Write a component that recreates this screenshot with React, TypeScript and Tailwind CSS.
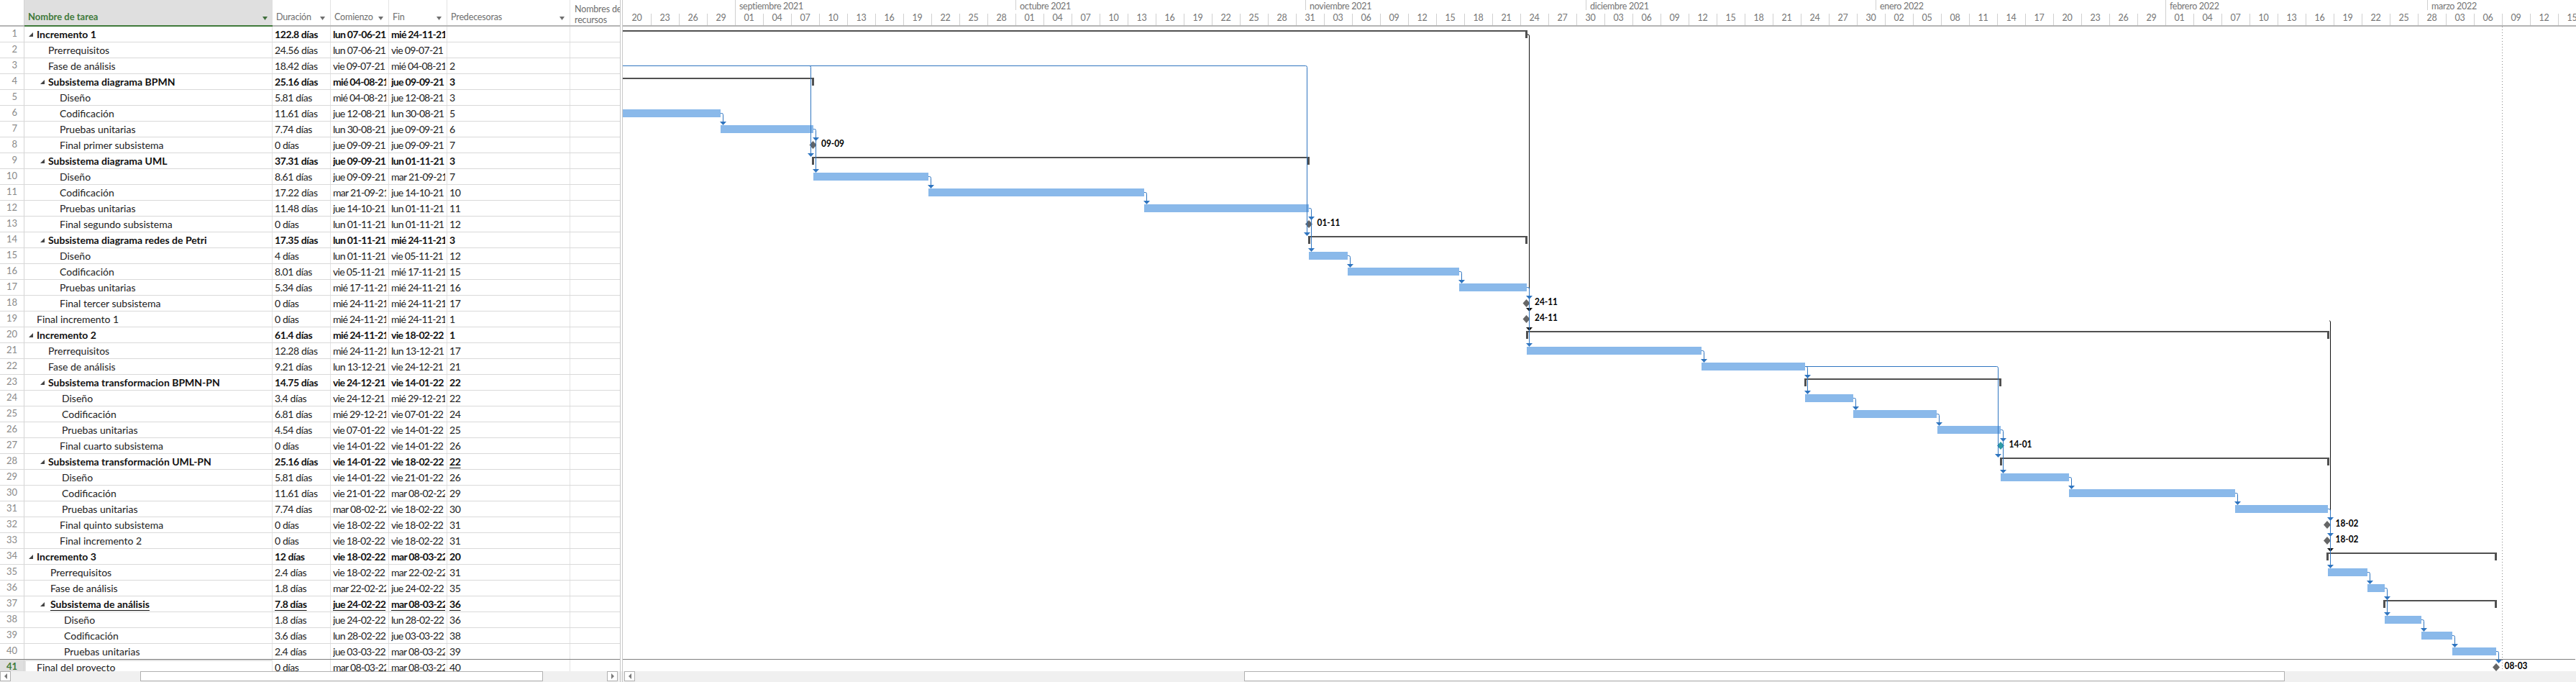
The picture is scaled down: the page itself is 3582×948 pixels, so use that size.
type Row = {
  name: string;
  x: number;
  bold?: boolean;
  toggle?: number;
  dur: string;
  start: string;
  end: string;
  pred: string;
  underline?: boolean;
  predUnderline?: boolean;
};

const rows: Row[] = [
  { name: 'Incremento 1', x: 51, bold: true, toggle: 40, dur: '122.8 días', start: 'lun 07-06-21', end: 'mié 24-11-21', pred: '' },
  { name: 'Prerrequisitos', x: 67, dur: '24.56 días', start: 'lun 07-06-21', end: 'vie 09-07-21', pred: '' },
  { name: 'Fase de análisis', x: 67, dur: '18.42 días', start: 'vie 09-07-21', end: 'mié 04-08-21', pred: '2' },
  { name: 'Subsistema diagrama BPMN', x: 67, bold: true, toggle: 56, dur: '25.16 días', start: 'mié 04-08-21', end: 'jue 09-09-21', pred: '3' },
  { name: 'Diseño', x: 83, dur: '5.81 días', start: 'mié 04-08-21', end: 'jue 12-08-21', pred: '3' },
  { name: 'Codificación', x: 83, dur: '11.61 días', start: 'jue 12-08-21', end: 'lun 30-08-21', pred: '5' },
  { name: 'Pruebas unitarias', x: 83, dur: '7.74 días', start: 'lun 30-08-21', end: 'jue 09-09-21', pred: '6' },
  { name: 'Final primer subsistema', x: 83, dur: '0 días', start: 'jue 09-09-21', end: 'jue 09-09-21', pred: '7' },
  { name: 'Subsistema diagrama UML', x: 67, bold: true, toggle: 56, dur: '37.31 días', start: 'jue 09-09-21', end: 'lun 01-11-21', pred: '3' },
  { name: 'Diseño', x: 83, dur: '8.61 días', start: 'jue 09-09-21', end: 'mar 21-09-21', pred: '7' },
  { name: 'Codificación', x: 83, dur: '17.22 días', start: 'mar 21-09-21', end: 'jue 14-10-21', pred: '10' },
  { name: 'Pruebas unitarias', x: 83, dur: '11.48 días', start: 'jue 14-10-21', end: 'lun 01-11-21', pred: '11' },
  { name: 'Final segundo subsistema', x: 83, dur: '0 días', start: 'lun 01-11-21', end: 'lun 01-11-21', pred: '12' },
  { name: 'Subsistema diagrama redes de Petri', x: 67, bold: true, toggle: 56, dur: '17.35 días', start: 'lun 01-11-21', end: 'mié 24-11-21', pred: '3' },
  { name: 'Diseño', x: 83, dur: '4 días', start: 'lun 01-11-21', end: 'vie 05-11-21', pred: '12' },
  { name: 'Codificación', x: 83, dur: '8.01 días', start: 'vie 05-11-21', end: 'mié 17-11-21', pred: '15' },
  { name: 'Pruebas unitarias', x: 83, dur: '5.34 días', start: 'mié 17-11-21', end: 'mié 24-11-21', pred: '16' },
  { name: 'Final tercer subsistema', x: 83, dur: '0 días', start: 'mié 24-11-21', end: 'mié 24-11-21', pred: '17' },
  { name: 'Final incremento 1', x: 51, dur: '0 días', start: 'mié 24-11-21', end: 'mié 24-11-21', pred: '1' },
  { name: 'Incremento 2', x: 51, bold: true, toggle: 40, dur: '61.4 días', start: 'mié 24-11-21', end: 'vie 18-02-22', pred: '1' },
  { name: 'Prerrequisitos', x: 67, dur: '12.28 días', start: 'mié 24-11-21', end: 'lun 13-12-21', pred: '17' },
  { name: 'Fase de análisis', x: 67, dur: '9.21 días', start: 'lun 13-12-21', end: 'vie 24-12-21', pred: '21' },
  { name: 'Subsistema transformacion BPMN-PN', x: 67, bold: true, toggle: 56, dur: '14.75 días', start: 'vie 24-12-21', end: 'vie 14-01-22', pred: '22' },
  { name: 'Diseño', x: 86, dur: '3.4 días', start: 'vie 24-12-21', end: 'mié 29-12-21', pred: '22' },
  { name: 'Codificación', x: 86, dur: '6.81 días', start: 'mié 29-12-21', end: 'vie 07-01-22', pred: '24' },
  { name: 'Pruebas unitarias', x: 86, dur: '4.54 días', start: 'vie 07-01-22', end: 'vie 14-01-22', pred: '25' },
  { name: 'Final cuarto subsistema', x: 83, dur: '0 días', start: 'vie 14-01-22', end: 'vie 14-01-22', pred: '26' },
  { name: 'Subsistema transformación UML-PN', x: 67, bold: true, toggle: 56, dur: '25.16 días', start: 'vie 14-01-22', end: 'vie 18-02-22', pred: '22', predUnderline: true },
  { name: 'Diseño', x: 86, dur: '5.81 días', start: 'vie 14-01-22', end: 'vie 21-01-22', pred: '26' },
  { name: 'Codificación', x: 86, dur: '11.61 días', start: 'vie 21-01-22', end: 'mar 08-02-22', pred: '29' },
  { name: 'Pruebas unitarias', x: 86, dur: '7.74 días', start: 'mar 08-02-22', end: 'vie 18-02-22', pred: '30' },
  { name: 'Final quinto subsistema', x: 83, dur: '0 días', start: 'vie 18-02-22', end: 'vie 18-02-22', pred: '31' },
  { name: 'Final incremento 2', x: 83, dur: '0 días', start: 'vie 18-02-22', end: 'vie 18-02-22', pred: '31' },
  { name: 'Incremento 3', x: 51, bold: true, toggle: 40, dur: '12 días', start: 'vie 18-02-22', end: 'mar 08-03-22', pred: '20' },
  { name: 'Prerrequisitos', x: 70, dur: '2.4 días', start: 'vie 18-02-22', end: 'mar 22-02-22', pred: '31' },
  { name: 'Fase de análisis', x: 70, dur: '1.8 días', start: 'mar 22-02-22', end: 'jue 24-02-22', pred: '35' },
  { name: 'Subsistema de análisis', x: 70, bold: true, toggle: 56, underline: true, dur: '7.8 días', start: 'jue 24-02-22', end: 'mar 08-03-22', pred: '36' },
  { name: 'Diseño', x: 89, dur: '1.8 días', start: 'jue 24-02-22', end: 'lun 28-02-22', pred: '36' },
  { name: 'Codificación', x: 89, dur: '3.6 días', start: 'lun 28-02-22', end: 'jue 03-03-22', pred: '38' },
  { name: 'Pruebas unitarias', x: 89, dur: '2.4 días', start: 'jue 03-03-22', end: 'mar 08-03-22', pred: '39' },
  { name: 'Final del proyecto', x: 51, dur: '0 días', start: 'mar 08-03-22', end: 'mar 08-03-22', pred: '40' },
];

const months = [
  { label: '', width: 156 },
  { label: 'septiembre 2021', width: 390 },
  { label: 'octubre 2021', width: 403 },
  { label: 'noviembre 2021', width: 390 },
  { label: 'diciembre 2021', width: 403 },
  { label: 'enero 2022', width: 403 },
  { label: 'febrero 2022', width: 364 },
  { label: 'marzo 2022', width: 206 },
];

const days = [
  '20', '23', '26', '29',
  '01', '04', '07', '10', '13', '16', '19', '22', '25', '28',
  '01', '04', '07', '10', '13', '16', '19', '22', '25', '28', '31',
  '03', '06', '09', '12', '15', '18', '21', '24', '27', '30',
  '03', '06', '09', '12', '15', '18', '21', '24', '27', '30',
  '02', '05', '08', '11', '14', '17', '20', '23', '26', '29',
  '01', '04', '07', '10', '13', '16', '19', '22', '25', '28',
  '03', '06', '09', '12', '15',
];

// row -> [from, to] in page pixels
const bars: [number, number, number][] = [
  [6, 867, 1003], [7, 1003, 1132], [10, 1132, 1292], [11, 1292, 1592], [12, 1592, 1821],
  [15, 1821, 1875], [16, 1875, 2030], [17, 2030, 2124], [21, 2124, 2367], [22, 2367, 2511],
  [24, 2511, 2578], [25, 2578, 2694], [26, 2695, 2783], [29, 2783, 2878], [30, 2878, 3109],
  [31, 3109, 3238], [35, 3238, 3293], [36, 3293, 3317], [38, 3317, 3368], [39, 3368, 3411],
  [40, 3411, 3472],
];

// the first two start before the visible part of the timescale
const summaries: [number, number, number][] = [
  [1, 850, 2125], [4, 850, 1133], [9, 1130, 1822], [14, 1820, 2125], [20, 2123, 3240],
  [23, 2510, 2784], [28, 2782, 3240], [34, 3236, 3473], [37, 3315, 3473],
];

const milestones: [number, number, string, string][] = [
  [8, 1131.5, '09-09', '#5f6368'], [13, 1821, '01-11', '#5f6368'], [18, 2123.5, '24-11', '#666666'],
  [19, 2123.5, '24-11', '#666666'], [27, 2783, '14-01', '#2e9aa5'], [32, 3237, '18-02', '#666666'],
  [33, 3237, '18-02', '#666666'], [41, 3472, '08-03', '#666666'],
];

// from bar end at x0 on row, dropping at x to each arrow row
const links: { row: number; x0: number; x: number; to: number[] }[] = [
  { row: 3, x0: 867, x: 1128.5, to: [9] },
  { row: 3, x0: 867, x: 1818.5, to: [14] },
  { row: 6, x0: 1003, x: 1006.5, to: [7] },
  { row: 7, x0: 1132, x: 1135.5, to: [8, 10] },
  { row: 10, x0: 1292, x: 1295.5, to: [11] },
  { row: 11, x0: 1592, x: 1595.5, to: [12] },
  { row: 12, x0: 1821, x: 1824.5, to: [13, 15] },
  { row: 15, x0: 1875, x: 1878.5, to: [16] },
  { row: 16, x0: 2030, x: 2033.5, to: [17] },
  { row: 17, x0: 2124, x: 2127.5, to: [18, 21] },
  { row: 21, x0: 2367, x: 2370.5, to: [22] },
  { row: 22, x0: 2511, x: 2514.5, to: [23, 24] },
  { row: 22, x0: 2511, x: 2779.5, to: [28] },
  { row: 24, x0: 2578, x: 2581.5, to: [25] },
  { row: 25, x0: 2694, x: 2697.5, to: [26] },
  { row: 26, x0: 2783, x: 2786.5, to: [27, 29] },
  { row: 29, x0: 2878, x: 2881.5, to: [30] },
  { row: 30, x0: 3109, x: 3112.5, to: [31] },
  { row: 31, x0: 3238, x: 3241.5, to: [32, 33, 35] },
  { row: 35, x0: 3293, x: 3296.5, to: [36] },
  { row: 36, x0: 3317, x: 3320.5, to: [37, 38] },
  { row: 38, x0: 3368, x: 3371.5, to: [39] },
  { row: 39, x0: 3411, x: 3414.5, to: [40] },
  { row: 40, x0: 3472, x: 3475.5, to: [41] },
];

const rowTop = (n: number) => 37 + 22 * (n - 1);

const Arrow = ({ x, tip, color }: { x: number; tip: number; color: string }) => (
  <polygon points={`${x - 4.5},${tip - 5} ${x + 4.5},${tip - 5} ${x},${tip}`} fill={color} />
);

const FilterMark = ({ green }: { green?: boolean }) => (
  <svg width="7" height="5" viewBox="0 0 7 5" className="mt-[3px] shrink-0">
    <polygon points="0,0 7,0 3.5,5" fill={green ? '#3f6f3c' : '#6f6f6f'} />
  </svg>
);

const HeaderCell = ({ label, className }: { label: string; className: string }) => (
  <div className={`flex items-center justify-between border-r border-[#e3e3e3] pr-[7px] pl-[5px] pt-[13px] text-[12.5px] tracking-[-0.15px] text-[#6e6e6e] ${className}`}>
    <span>{label}</span>
    <FilterMark />
  </div>
);

const TaskTable = () => (
  <div className="w-[863px] shrink-0 overflow-hidden border-r border-[#c8c8c8]">
    <div className="flex h-[37px] border-b-2 border-[#b4b4b4]">
      <div className="w-[34px] shrink-0 border-r border-[#d4d4d4]" />
      <div className="-mb-[2px] flex w-[345px] shrink-0 items-center justify-between border-b-2 border-[#3f7a3a] bg-[#dfdfdf] pr-[7px] pl-[5px] pt-[13px] text-[13px] font-bold text-[#3f7a3a]">
        <span>Nombre de tarea</span>
        <FilterMark green />
      </div>
      <HeaderCell label="Duración" className="w-[81px] shrink-0" />
      <HeaderCell label="Comienzo" className="w-[81px] shrink-0" />
      <HeaderCell label="Fin" className="w-[81px] shrink-0" />
      <HeaderCell label="Predecesoras" className="w-[171px] shrink-0" />
      <div className="w-[69px] shrink-0 overflow-hidden whitespace-nowrap pl-[6px] pt-[5px] text-[12.5px] leading-[15px] tracking-[-0.15px] text-[#6e6e6e]">
        Nombres de
        <br />
        recursos
      </div>
    </div>
    {rows.map((row, i) => {
      const last = i === rows.length - 1;
      const line = i === rows.length - 2 ? 'border-[#7f7f7f]' : 'border-[#d9d9d9]';
      const text = row.bold ? 'font-bold text-[#111]' : 'text-[#222]';
      const mark = row.underline ? 'underline decoration-1 underline-offset-[3px]' : '';
      return (
        <div key={i} className={`flex h-[22px] border-b leading-[21px] ${line}`}>
          <div className={`w-[34px] shrink-0 border-r border-[#d4d4d4] pr-[9px] text-right text-[13px] leading-[18px] ${last ? 'bg-[#dfdfdf] font-bold text-[#3f7a3a]' : 'text-[#8a8a8a]'}`}>
            {i + 1}
          </div>
          <div
            className={`relative w-[345px] shrink-0 whitespace-nowrap border-r border-[#e3e3e3] ${last ? 'h-[22px] border-2 border-[#3f7a3a]' : ''} ${text}`}
          >
            {row.toggle && (
              <svg width="6" height="6" viewBox="0 0 6 6" className="absolute top-[8px]" style={{ left: row.toggle - 34 }}>
                <polygon points="6,0 6,6 0,6" fill="#444" />
              </svg>
            )}
            <span className={`absolute ${mark}`} style={{ left: row.x - 34 - (last ? 2 : 0), top: last ? -2 : 0 }}>
              {row.name}
            </span>
          </div>
          <div className={`w-[81px] shrink-0 overflow-hidden whitespace-nowrap border-r border-[#e3e3e3] pl-[3px] tracking-[-0.4px] ${text} ${mark}`}>{row.dur}</div>
          <div className={`w-[81px] shrink-0 border-r border-[#e3e3e3] px-[3px] tracking-[-0.7px] ${text}`}>
            <div className={`overflow-hidden whitespace-nowrap ${mark}`}>{row.start}</div>
          </div>
          <div className={`w-[81px] shrink-0 border-r border-[#e3e3e3] pl-[3px] pr-[2px] tracking-[-0.7px] ${text}`}>
            <div className={`overflow-hidden whitespace-nowrap ${mark}`}>{row.end}</div>
          </div>
          <div className={`w-[171px] shrink-0 border-r border-[#e3e3e3] pl-[3px] tracking-[-0.4px] ${text}`}>
            <span className={row.underline || row.predUnderline ? 'underline decoration-1 underline-offset-[3px]' : ''}>{row.pred}</span>
          </div>
          <div className="w-[69px] shrink-0" />
        </div>
      );
    })}
  </div>
);

const Timescale = () => (
  <div className="h-[37px] overflow-hidden border-b-2 border-[#b4b4b4] text-[12.5px] tracking-[-0.3px] text-[#757575]">
    <div className="flex h-[14px] w-[2800px] leading-[18px]">
      {months.map((m) => (
        <div key={m.width + m.label} className="whitespace-nowrap border-l border-[#d0d0d0] pl-[5px] first:border-l-0" style={{ width: m.width }}>
          {m.label}
        </div>
      ))}
    </div>
    <div className="flex w-[2800px]">
      {days.map((d, i) => (
        <div key={i} className="relative h-[21px] w-[39px] shrink-0 pt-[2px] text-center leading-[18px]">
          {i > 0 && (
            <span className={`absolute bottom-0 left-0 w-px bg-[#d0d0d0] ${i === 4 || i === 55 ? 'h-[21px]' : 'h-[16px]'}`} />
          )}
          {d}
        </div>
      ))}
    </div>
  </div>
);

const GanttChart = () => (
  <svg className="block min-h-0 flex-1" width="2715" height="896" viewBox="867 37 2715 896">
    <line x1="3480.5" y1="37" x2="3480.5" y2="933" stroke="#8a8a8a" strokeDasharray="1 3" />
    <line x1="867" y1="916.5" x2="3582" y2="916.5" stroke="#7f7f7f" />

    {/* black links from the summary tasks */}
    <path d="M2125 48 H2126 Q2127.5 48 2127.5 50 V452" stroke="#111" fill="none" />
    <Arrow x={2127.5} tip={rowTop(19)} color="#111" />
    <Arrow x={2127.5} tip={rowTop(20) + 5} color="#111" />
    <path d="M3240 446 H3240.5 Q3241.5 446 3241.5 448 V762" stroke="#111" fill="none" />
    <Arrow x={3241.5} tip={rowTop(34) + 4} color="#111" />

    {bars.map(([row, a, b]) => (
      <rect key={row} x={a} y={rowTop(row) + 5} width={b - a} height={11} fill="#8ab9ea" />
    ))}

    {summaries.map(([row, a, b]) => {
      const y = rowTop(row) + 5;
      return (
        <g key={row} fill="#505050">
          <rect x={a} y={y} width={b - a} height={2} />
          <rect x={a} y={y} width={3} height={11} />
          <rect x={b - 3} y={y} width={3} height={11} />
        </g>
      );
    })}

    {milestones.map(([row, x, label, color]) => {
      const cy = rowTop(row) + 10.5;
      return (
        <g key={row}>
          <polygon points={`${x - 5},${cy} ${x},${cy - 5.5} ${x + 5},${cy} ${x},${cy + 5.5}`} fill={color} />
          <text x={x + 11.5} y={cy + 2.5} fontSize="14" fontWeight="700" fill="#000" fontFamily="Lato, sans-serif" textLength="32" lengthAdjust="spacingAndGlyphs">
            {label}
          </text>
        </g>
      );
    })}

    {links.map((l, i) => {
      const y = rowTop(l.row) + 10.5;
      const tip = rowTop(l.to[l.to.length - 1]) + 5;
      return (
        <g key={i}>
          <path d={`M${l.x0} ${y} H${l.x - 2} Q${l.x} ${y} ${l.x} ${y + 2} V${tip - 2}`} stroke="#2f75c0" fill="none" />
          {l.to.map((t) => (
            <Arrow key={t} x={l.x} tip={rowTop(t) + 5} color="#2f75c0" />
          ))}
        </g>
      );
    })}
  </svg>
);

const ScrollButton = ({ left, className }: { left?: boolean; className: string }) => (
  <div className={`flex h-[14px] w-[15px] items-center justify-center border border-[#b0b0b0] bg-white ${className}`}>
    <svg width="4" height="8" viewBox="0 0 4 8">
      <polygon points={left ? '4,0 4,8 0,4' : '0,0 0,8 4,4'} fill="#7a7a7a" />
    </svg>
  </div>
);

const App = () => (
  <div className="flex h-[948px] w-[3582px] flex-col overflow-hidden bg-white font-['Lato',sans-serif] text-[14px]">
    <div className="flex h-[933px] overflow-hidden">
      <TaskTable />
      <div className="w-[3px] shrink-0 border-r border-[#c8c8c8]" />
      <div className="flex min-w-0 flex-1 flex-col">
        <Timescale />
        <GanttChart />
      </div>
    </div>
    <div className="flex h-[15px] bg-[#f0f0f0]">
      <div className="flex w-[863px] shrink-0 border-r border-[#c8c8c8]">
        <ScrollButton left className="" />
        <div className="ml-[180px] h-[14px] w-[560px] border border-[#b0b0b0] bg-white" />
        <ScrollButton className="ml-[89px]" />
      </div>
      <div className="w-[3px] shrink-0 border-r border-[#c8c8c8]" />
      <ScrollButton left className="ml-[2px]" />
      <div className="ml-[847px] h-[14px] w-[1447px] border border-[#b0b0b0] bg-white" />
    </div>
  </div>
);

export default App;
